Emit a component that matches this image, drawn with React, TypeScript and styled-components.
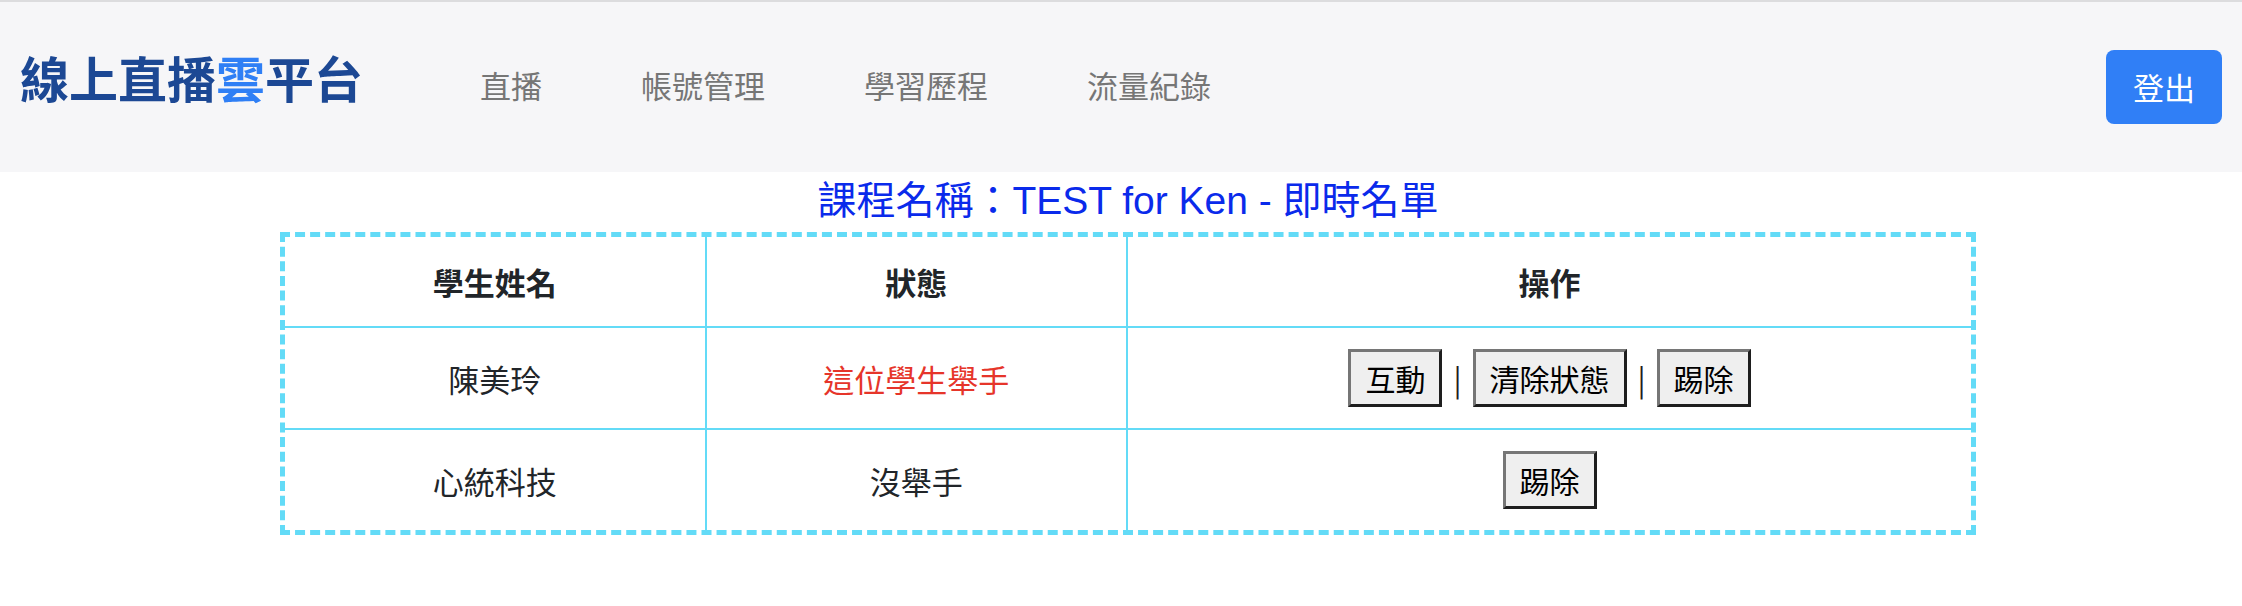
import React from "react";
import styled, { createGlobalStyle } from "styled-components";

const GlobalStyle = createGlobalStyle`
  html, body {
    margin: 0;
    padding: 0;
    background: #ffffff;
    font-family: "Noto Sans CJK TC", "Noto Sans", sans-serif;
    color: #212529;
  }
`;

const NavBar = styled.nav`
  display: flex;
  align-items: center;
  height: 170px;
  box-sizing: content-box;
  border-top: 2px solid #dcdcde;
  background: #f6f6f8;
  padding: 0 20px;
`;

const LeftGroup = styled.div`
  display: flex;
  align-items: baseline;
  margin-bottom: 22px;
`;

const Brand = styled.div`
  font-size: 49px;
  font-weight: 700;
  line-height: 1;
  color: #1c4894;
`;

const BrandAccent = styled.span`
  color: #2f7ff5;
`;

const NavLinks = styled.div`
  display: flex;
  gap: 99px;
  margin-left: 117px;
`;

const NavLink = styled.a`
  font-size: 31px;
  line-height: 1;
  color: #767676;
  text-decoration: none;
`;

const LogoutButton = styled.button`
  margin-left: auto;
  font-family: inherit;
  font-size: 31px;
  line-height: 46px;
  padding: 14px 27px;
  color: #ffffff;
  background: #307ff6;
  border: none;
  border-radius: 8px;
`;

const Content = styled.main`
  padding-left: 14px;
`;

const CourseTitle = styled.h1`
  margin: 7px 0 9px;
  text-align: center;
  font-family: "Liberation Sans", "Noto Sans CJK TC", sans-serif;
  font-size: 39px;
  font-weight: 400;
  line-height: 44px;
  color: #0a2aeb;
`;

const Table = styled.table`
  width: 1696px;
  margin: 0 auto;
  border-collapse: separate;
  border-spacing: 0;
  border: 5px dashed #63dbf7;
`;

const HeadCell = styled.th<{ $last?: boolean }>`
  height: 89px;
  padding: 0;
  font-size: 31px;
  font-weight: 700;
  color: #212529;
  text-align: center;
  vertical-align: middle;
  border-bottom: 2px solid #63dbf7;
  border-right: ${(p) => (p.$last ? "none" : "2px solid #63dbf7")};
`;

const Cell = styled.td<{ $last?: boolean; $bottom?: boolean; $tone?: string }>`
  height: 100px;
  padding: 0;
  font-size: 31px;
  color: ${(p) => p.$tone || "#212529"};
  text-align: center;
  vertical-align: middle;
  border-bottom: ${(p) => (p.$bottom ? "none" : "2px solid #63dbf7")};
  border-right: ${(p) => (p.$last ? "none" : "2px solid #63dbf7")};
`;

const ActionGroup = styled.div`
  display: inline-flex;
  align-items: center;
  gap: 11px;
`;

const ActionButton = styled.button`
  font-family: inherit;
  font-size: 30px;
  line-height: 40px;
  padding: 6px 14px;
  color: #000000;
  background: #efefef;
  border-width: 3px;
  border-style: solid;
  border-color: #767676 #1e1e1e #1e1e1e #767676;
`;

const Separator = styled.span`
  font-size: 30px;
  color: #1e1e1e;
  line-height: 1;
`;

type Row = {
  name: string;
  status: string;
  raised: boolean;
  actions: string[];
};

const rows: Row[] = [
  { name: "陳美玲", status: "這位學生舉手", raised: true, actions: ["互動", "清除狀態", "踢除"] },
  { name: "心統科技", status: "沒舉手", raised: false, actions: ["踢除"] },
];

export default function App() {
  return (
    <>
      <GlobalStyle />
      <NavBar>
        <LeftGroup>
          <Brand>
            線上直播<BrandAccent>雲</BrandAccent>平台
          </Brand>
          <NavLinks>
            <NavLink>直播</NavLink>
            <NavLink>帳號管理</NavLink>
            <NavLink>學習歷程</NavLink>
            <NavLink>流量紀錄</NavLink>
          </NavLinks>
        </LeftGroup>
        <LogoutButton>登出</LogoutButton>
      </NavBar>
      <Content>
        <CourseTitle>課程名稱：TEST for Ken - 即時名單</CourseTitle>
        <Table>
          <colgroup>
            <col style={{ width: "25%" }} />
            <col style={{ width: "25%" }} />
            <col style={{ width: "50%" }} />
          </colgroup>
          <thead>
            <tr>
              <HeadCell>學生姓名</HeadCell>
              <HeadCell>狀態</HeadCell>
              <HeadCell $last>操作</HeadCell>
            </tr>
          </thead>
          <tbody>
            {rows.map((r, i) => {
              const bottom = i === rows.length - 1;
              return (
                <tr key={r.name}>
                  <Cell $bottom={bottom}>{r.name}</Cell>
                  <Cell $bottom={bottom} $tone={r.raised ? "#e6352a" : undefined}>
                    {r.status}
                  </Cell>
                  <Cell $bottom={bottom} $last>
                    <ActionGroup>
                      {r.actions.map((a, j) => (
                        <React.Fragment key={a}>
                          {j > 0 && <Separator>|</Separator>}
                          <ActionButton>{a}</ActionButton>
                        </React.Fragment>
                      ))}
                    </ActionGroup>
                  </Cell>
                </tr>
              );
            })}
          </tbody>
        </Table>
      </Content>
    </>
  );
}
